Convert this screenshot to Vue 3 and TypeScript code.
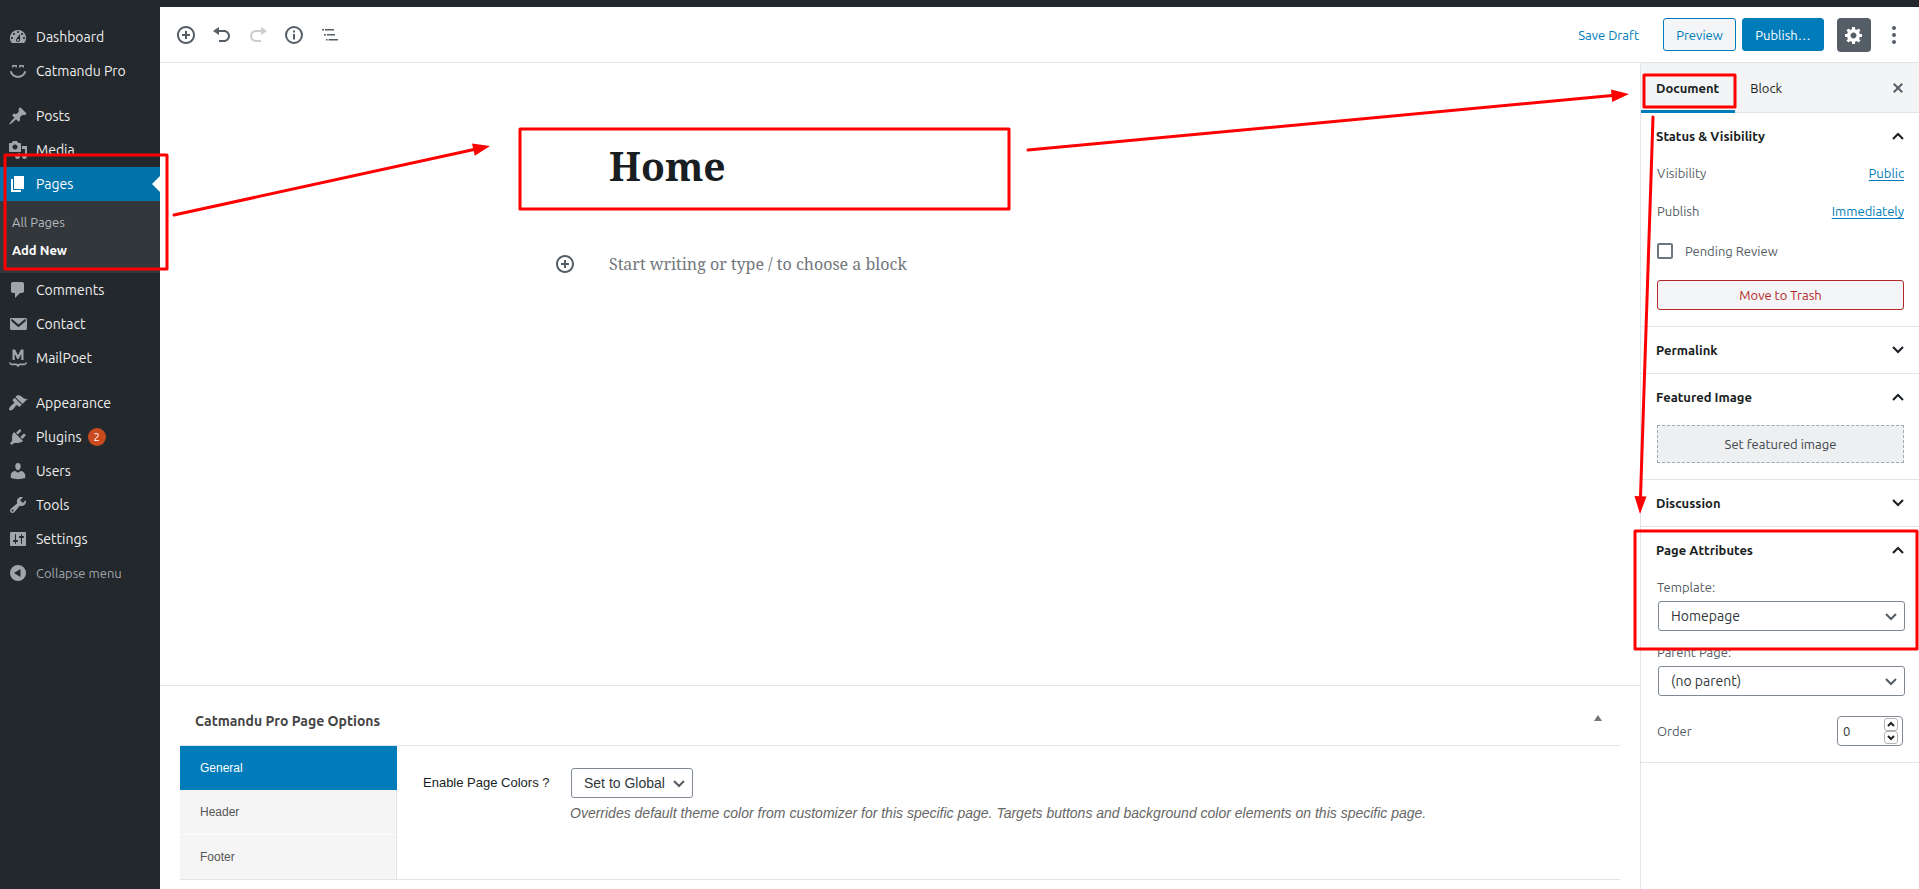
<script setup lang="ts">
import { ref } from 'vue'

interface MenuEntry {
  label: string
  icon: string
  current?: boolean
  badge?: number
  children?: { label: string; current?: boolean }[]
}

const icons: Record<string, string> = {
  dashboard:
    'M3.76 16h12.48A7.998 7.998 0 0 0 10 3a7.998 7.998 0 0 0-6.24 13zM10 4c.55 0 1 .45 1 1s-.45 1-1 1-1-.45-1-1 .45-1 1-1zM6 6c.55 0 1 .45 1 1s-.45 1-1 1-1-.45-1-1 .45-1 1-1zm8 0c.55 0 1 .45 1 1s-.45 1-1 1-1-.45-1-1 .45-1 1-1zm-5.37 5.55L12 7v6c0 1.1-.9 2-2 2s-2-.9-2-2c0-.57.24-1.08.63-1.45zM4 10c.55 0 1 .45 1 1s-.45 1-1 1-1-.45-1-1 .45-1 1-1zm12 0c.55 0 1 .45 1 1s-.45 1-1 1-1-.45-1-1 .45-1 1-1zm-5 3c0-.55-.45-1-1-1s-1 .45-1 1 .45 1 1 1 1-.45 1-1z',
  smiley:
    'M5 4h3c.6 0 1 .4 1 1v1.500H7.500V5.600h-2v.9H4V5c0-.6.4-1 1-1zm7 0h3c.6 0 1 .4 1 1v1.500h-1.500v-.9h-2v.9H11V5c0-.6.4-1 1-1zM1.800 10.300h1.900c.9 2.800 3.400 4.700 6.300 4.700s5.400-1.900 6.300-4.700h1.900c-.9 3.900-4.200 6.500-8.200 6.500s-7.300-2.600-8.200-6.500z',
  post: 'M10.44 3.02l1.82-1.82 6.36 6.35-1.83 1.82c-1.05-.68-2.48-.57-3.41.36l-.75.75c-.92.93-1.04 2.35-.35 3.41l-1.83 1.82-2.41-2.41-2.8 2.79c-.42.42-3.38 2.71-3.8 2.29s1.86-3.39 2.28-3.81l2.79-2.79L4.1 9.36l1.83-1.82c1.05.69 2.48.57 3.4-.36l.75-.75c.93-.92 1.05-2.35.36-3.41z',
  media:
    'M13 11V4c0-.55-.45-1-1-1h-1.67L9 1H5L3.67 3H2c-.55 0-1 .45-1 1v7c0 .55.45 1 1 1h10c.55 0 1-.45 1-1zM7 4.5c1.38 0 2.5 1.12 2.5 2.5S8.38 9.5 7 9.5 4.5 8.38 4.5 7 5.62 4.500 7 4.500zM14 6h5v10.5c0 1.38-1.12 2.5-2.5 2.5S14 17.88 14 16.5s1.12-2.5 2.5-2.5c.17 0 .34.02.5.05V9h-3V6zm-4 8.05V13h2v3.5c0 1.38-1.12 2.5-2.5 2.5S7 17.88 7 16.5 8.12 14 9.5 14c.17 0 .34.02.5.05z',
  page: 'M6 15V2h10v13H6zm-1 1h8v2H3V5h2v11z',
  comment:
    'M5 2h9c1.1 0 2 .9 2 2v7c0 1.1-.9 2-2 2h-2l-5 5v-5H5c-1.100 0-2-.9-2-2V4c0-1.100.9-2 2-2z',
  email:
    'M3 4h14.500c.8 0 1.500.7 1.500 1.500v9c0 .8-.7 1.500-1.500 1.500h-14c-.8 0-1.500-.7-1.500-1.500v-9C2 4.700 2.300 4 3 4zM3.200 5.300v1.700l7.300 6.300 7.300-6.300V5.300h-1.100l-6.200 5.300-6.200-5.300z',
  mailpoet:
    'M4.500 12V1.500h2.600L10 7.200l2.900-5.700h2.600V12h-2.200V5.800L10.700 11H9.300L6.700 5.800V12zM1 14.200h1.300c.3 1 1 1.300 2 1.300h3.200c1.200 0 1.900.3 2.500 1 .6-.7 1.300-1 2.500-1h3.200c1 0 1.700-.3 2-1.300H19c-.2 2-1.400 3-3.300 3h-3.200c-.9 0-1.500.5-1.700 1.500H9.200c-.2-1-.8-1.500-1.700-1.500H4.300c-1.900 0-3.100-1-3.300-3z',
  appearance:
    'M14.48 11.06L7.41 3.99l1.5-1.5c.5-.56 2.3-.47 3.51.32 1.21.8 1.43 1.28 2.91 2.1 1.18.64 2.45 1.26 4.45.85zm-.71.71L6.7 4.7 4.93 6.47c-.39.39-.39 1.02 0 1.41l1.06 1.06c.39.39.39 1.03 0 1.42-.6.6-1.43 1.11-2.21 1.69-.35.26-.7.53-1.01.84C1.43 14.23.4 16.08 1.4 17.07c.99 1 2.84-.03 4.18-1.36.31-.31.58-.66.85-1.02.57-.78 1.08-1.61 1.69-2.21.39-.39 1.02-.39 1.41 0l1.06 1.06c.39.39 1.02.39 1.41 0z',
  plugin:
    'M13.11 4.36L9.87 7.6 8 5.73l3.24-3.24c.35-.34 1.05-.2 1.56.32.52.51.66 1.21.31 1.55zm-8 1.77l.91-1.12 9.01 9.01-1.19.84c-.71.71-2.63 1.16-3.82 1.16H6.14L4.9 17.26c-.59.59-1.54.59-2.12 0-.59-.58-.59-1.53 0-2.12l1.24-1.24v-3.88c0-1.13.4-3.19 1.09-3.89zm7.26 3.97l3.24-3.24c.34-.35 1.04-.21 1.55.31.52.51.66 1.21.31 1.55l-3.24 3.25z',
  user: 'M10 9.25c-2.27 0-2.73-3.44-2.73-3.44C7 4.02 7.82 2 9.97 2c2.16 0 2.98 2.02 2.71 3.81 0 0-.41 3.44-2.68 3.44zm0 2.57L12.72 10c2.39 0 4.52 2.33 4.52 4.53v2.49s-3.65 1.13-7.24 1.13c-3.65 0-7.24-1.13-7.24-1.13v-2.49c0-2.25 1.94-4.48 4.47-4.48z',
  tool: 'M16.68 9.77c-1.34 1.34-3.3 1.67-4.95.99l-5.41 6.52c-.99.99-2.59.99-3.58 0s-.99-2.59 0-3.57l6.52-5.42c-.68-1.65-.35-3.61.99-4.95 1.28-1.28 3.12-1.62 4.72-1.06l-2.89 2.89 2.82 2.82 2.86-2.87c.53 1.58.18 3.39-1.08 4.65zM3.81 16.21c.4.39 1.04.39 1.43 0 .4-.4.4-1.04 0-1.43-.39-.4-1.03-.4-1.43 0-.39.39-.39 1.03 0 1.43z',
  settings:
    'M18 16V4c0-.55-.45-1-1-1H3c-.55 0-1 .45-1 1v12c0 .55.45 1 1 1h14c.55 0 1-.45 1-1zM8 11h1c.55 0 1 .45 1 1s-.45 1-1 1H8v1.5c0 .28-.22.5-.5.5s-.5-.22-.5-.5V13H6c-.55 0-1-.45-1-1s.45-1 1-1h1V5.500c0-.28.22-.5.5-.5s.5.22.5.5V11zm5-2h-1c-.55 0-1-.45-1-1s.45-1 1-1h1V5.500c0-.28.22-.5.5-.5s.5.22.5.5V7h1c.55 0 1 .45 1 1s-.45 1-1 1h-1v5.500c0 .28-.22.5-.5.5s-.5-.22-.5-.5V9z',
  collapse:
    'M10 2a8 8 0 1 0 0 16 8 8 0 0 0 0-16zM12.500 6v8L6 10z',
  insert:
    'M10 1c-5 0-9 4-9 9s4 9 9 9 9-4 9-9-4-9-9-9zm0 16c-3.9 0-7-3.1-7-7s3.1-7 7-7 7 3.1 7 7-3.1 7-7 7zm1-11H9v3H6v2h3v3h2v-3h3V9h-3V6z',
  undo: 'M12 5H7V2L1 6l6 4V7h5c2.2 0 4 1.8 4 4s-1.8 4-4 4H7v2h5c3.3 0 6-2.7 6-6s-2.7-6-6-6z',
  redo: 'M8 5h5V2l6 4-6 4V7H8c-2.2 0-4 1.8-4 4s1.8 4 4 4h5v2H8c-3.3 0-6-2.7-6-6s2.7-6 6-6z',
  info: 'M10 1a9 9 0 1 0 0 18 9 9 0 0 0 0-18zm0 2a7 7 0 1 1 0 14 7 7 0 0 1 0-14zM9 5.500h2v2H9zM9 9h2v5.500H9z',
  outline: 'M2 4h2v1.600H2zM5 4h9v1.600H5zM4 9h2v1.600H4zM7 9h8v1.600H7zM6 14h1.500v1.600H6zM8.500 14H18v1.600H8.500z',
  gear: 'M18 12h-2.18c-.17.7-.44 1.35-.81 1.93l1.54 1.54-2.1 2.1-1.54-1.54c-.58.36-1.23.63-1.91.79V19H8v-2.18c-.68-.16-1.33-.43-1.91-.79l-1.54 1.54-2.12-2.12 1.54-1.54c-.36-.58-.63-1.23-.79-1.91H1V9.03h2.17c.16-.7.44-1.35.8-1.94L2.43 5.55l2.1-2.1 1.54 1.54c.58-.37 1.24-.64 1.93-.81V2h3v2.18c.68.16 1.33.43 1.91.79l1.54-1.54 2.12 2.12-1.54 1.54c.36.59.64 1.24.8 1.94H18V12zm-8.5 1.5c1.66 0 3-1.34 3-3s-1.34-3-3-3-3 1.34-3 3 1.34 3 3 3z',
  more: 'M10 1a2 2 0 1 0 0 4 2 2 0 0 0 0-4zM10 8a2 2 0 1 0 0 4 2 2 0 0 0 0-4zM10 15a2 2 0 1 0 0 4 2 2 0 0 0 0-4z',
  close:
    'M14.95 6.46L11.41 10l3.54 3.54-1.41 1.41L10 11.42l-3.53 3.53-1.42-1.42L8.58 10 5.05 6.47l1.42-1.42L10 8.58l3.54-3.53z',
}

const menuGroups: MenuEntry[][] = [
  [
    { label: 'Dashboard', icon: 'dashboard' },
    { label: 'Catmandu Pro', icon: 'smiley' },
  ],
  [
    { label: 'Posts', icon: 'post' },
    { label: 'Media', icon: 'media' },
    {
      label: 'Pages',
      icon: 'page',
      current: true,
      children: [{ label: 'All Pages' }, { label: 'Add New', current: true }],
    },
    { label: 'Comments', icon: 'comment' },
    { label: 'Contact', icon: 'email' },
    { label: 'MailPoet', icon: 'mailpoet' },
  ],
  [
    { label: 'Appearance', icon: 'appearance' },
    { label: 'Plugins', icon: 'plugin', badge: 2 },
    { label: 'Users', icon: 'user' },
    { label: 'Tools', icon: 'tool' },
    { label: 'Settings', icon: 'settings' },
  ],
]

const tools = [
  { name: 'Add block', icon: 'insert', disabled: false },
  { name: 'Undo', icon: 'undo', disabled: false },
  { name: 'Redo', icon: 'redo', disabled: true },
  { name: 'Content structure', icon: 'info', disabled: false },
  { name: 'Block navigation', icon: 'outline', disabled: false },
]

const optionTabs = ['General', 'Header', 'Footer']
const activeOption = ref('General')
const title = ref('Home')
const body = ref('')
const pending = ref(false)
const template = ref('Homepage')
const parent = ref('(no parent)')
const pageColors = ref('Set to Global')
const order = ref(0)
</script>

<template>
  <div class="page">
    <div class="admin-bar"></div>
    <div class="admin">
      <nav class="menu" aria-label="Main menu">
        <ul v-for="(group, g) in menuGroups" :key="g" class="menu-group">
          <li v-for="entry in group" :key="entry.label">
            <a href="#" class="menu-link" :class="{ current: entry.current }">
              <svg class="icon" viewBox="0 0 20 20" fill-rule="evenodd"><path :d="icons[entry.icon]" /></svg>
              <span>{{ entry.label }}</span>
              <span v-if="entry.badge" class="badge">{{ entry.badge }}</span>
            </a>
            <ul v-if="entry.children" class="submenu">
              <li v-for="child in entry.children" :key="child.label">
                <a href="#" :class="{ current: child.current }">{{ child.label }}</a>
              </li>
            </ul>
          </li>
        </ul>
        <button type="button" class="menu-link collapse">
          <svg class="icon" viewBox="0 0 20 20" fill-rule="evenodd"><path :d="icons.collapse" /></svg>
          <span>Collapse menu</span>
        </button>
      </nav>

      <div class="editor">
        <header class="toolbar">
          <div class="tools">
            <button v-for="tool in tools" :key="tool.name" type="button" class="tool" :aria-label="tool.name" :disabled="tool.disabled">
              <svg class="icon" viewBox="0 0 20 20" fill-rule="evenodd"><path :d="icons[tool.icon]" /></svg>
            </button>
          </div>
          <div class="actions">
            <button type="button" class="save">Save Draft</button>
            <button type="button" class="preview">Preview</button>
            <button type="button" class="publish">Publish…</button>
            <button type="button" class="gear" aria-label="Settings">
              <svg class="icon" viewBox="0 0 20 20" fill-rule="evenodd"><path :d="icons.gear" /></svg>
            </button>
            <button type="button" class="more" aria-label="More options">
              <svg class="icon" viewBox="0 0 20 20"><path :d="icons.more" /></svg>
            </button>
          </div>
        </header>

        <div class="columns">
          <main class="content">
            <div class="canvas">
              <div class="writing">
                <input v-model="title" class="title" type="text" aria-label="Title" />
                <div class="block">
                  <button type="button" class="inserter" aria-label="Add block">
                    <svg class="icon" viewBox="0 0 20 20" fill-rule="evenodd"><path :d="icons.insert" /></svg>
                  </button>
                  <input v-model="body" class="paragraph" type="text" placeholder="Start writing or type / to choose a block" aria-label="Block text" />
                </div>
              </div>
            </div>

            <section class="meta">
              <div class="metabox">
                <div class="metabox-head">
                  <h2>Catmandu Pro Page Options</h2>
                  <button type="button" class="toggle" aria-label="Toggle panel">
                    <svg viewBox="0 0 8 6"><path d="M4 0l4 6H0z" /></svg>
                  </button>
                </div>
                <div class="metabox-body">
                  <div class="option-tabs">
                    <button
                      v-for="tab in optionTabs"
                      :key="tab"
                      type="button"
                      :class="{ active: tab === activeOption }"
                      @click="activeOption = tab"
                    >{{ tab }}</button>
                  </div>
                  <div class="option">
                    <label for="page-colors">Enable Page Colors ?</label>
                    <div class="option-field">
                      <div class="select small">
                        <select id="page-colors" v-model="pageColors">
                          <option>Set to Global</option>
                        </select>
                        <svg viewBox="0 0 10 6"><path d="M0 0l5 5 5-5" /></svg>
                      </div>
                      <p>Overrides default theme color from customizer for this specific page. Targets buttons and background color elements on this specific page.</p>
                    </div>
                  </div>
                </div>
              </div>
            </section>
          </main>

          <aside class="settings">
            <div class="tabs">
              <button type="button" class="tab active">Document</button>
              <button type="button" class="tab">Block</button>
              <button type="button" class="close" aria-label="Close settings">
                <svg class="icon" viewBox="0 0 20 20"><path :d="icons.close" /></svg>
              </button>
            </div>

            <section class="panel">
              <h2><button type="button">Status &amp; Visibility<svg viewBox="0 0 12 8"><path d="M1 7l5-5 5 5" /></svg></button></h2>
              <div class="panel-body status">
                <div class="row"><span>Visibility</span><a href="#">Public</a></div>
                <div class="row"><span>Publish</span><a href="#">Immediately</a></div>
                <label class="check"><input v-model="pending" type="checkbox" />Pending Review</label>
                <button type="button" class="trash">Move to Trash</button>
              </div>
            </section>

            <section class="panel">
              <h2><button type="button">Permalink<svg viewBox="0 0 12 8"><path d="M1 1l5 5 5-5" /></svg></button></h2>
            </section>

            <section class="panel">
              <h2><button type="button">Featured Image<svg viewBox="0 0 12 8"><path d="M1 7l5-5 5 5" /></svg></button></h2>
              <div class="panel-body">
                <button type="button" class="featured">Set featured image</button>
              </div>
            </section>

            <section class="panel">
              <h2><button type="button">Discussion<svg viewBox="0 0 12 8"><path d="M1 1l5 5 5-5" /></svg></button></h2>
            </section>

            <section class="panel">
              <h2><button type="button">Page Attributes<svg viewBox="0 0 12 8"><path d="M1 7l5-5 5 5" /></svg></button></h2>
              <div class="panel-body attributes">
                <label for="template">Template:</label>
                <div class="select">
                  <select id="template" v-model="template"><option>Homepage</option></select>
                  <svg viewBox="0 0 10 6"><path d="M0 0l5 5 5-5" /></svg>
                </div>
                <label for="parent">Parent Page:</label>
                <div class="select">
                  <select id="parent" v-model="parent"><option>(no parent)</option></select>
                  <svg viewBox="0 0 10 6"><path d="M0 0l5 5 5-5" /></svg>
                </div>
                <div class="order">
                  <label for="order">Order</label>
                  <div class="number">
                    <input id="order" v-model="order" type="number" />
                    <div class="spin">
                      <button type="button" aria-label="Increase order" @click="order++"><svg viewBox="0 0 6 4"><path d="M0 3l3-3 3 3" /></svg></button>
                      <button type="button" aria-label="Decrease order" @click="order--"><svg viewBox="0 0 6 4"><path d="M0 0l3 3 3-3" /></svg></button>
                    </div>
                  </div>
                </div>
              </div>
            </section>
          </aside>
        </div>
      </div>
    </div>

    <svg class="guide" viewBox="0 0 1919 889" preserveAspectRatio="none" aria-hidden="true">
      <g class="guide-lines">
        <rect x="5" y="155" width="162" height="114" />
        <rect x="520" y="129" width="489" height="80" />
        <rect x="1644" y="75" width="91" height="32" />
        <rect x="1635" y="531" width="282" height="118" />
        <path d="M174 215L474 149.500M1028 150L1612 95.500M1653 117L1640.500 497" />
      </g>
      <path class="guide-heads" d="M490 146l-18-2.500 2.800 12.200zM1629 94l-18-4.500 1.200 12.500zM1640 514l-5.500-18 12 .4z" />
    </svg>
  </div>
</template>

<style>
body {
  margin: 0;
}
</style>

<style scoped>
.page {
  position: relative;
  display: flex;
  flex-direction: column;
  min-height: 100vh;
  font-family: Ubuntu, "Open Sans", "Noto Sans", sans-serif;
  font-size: 13px;
  line-height: 18px;
  color: #191e23;
  background: #fff;
}
.page *,
.page *::before,
.page *::after {
  box-sizing: border-box;
}
ul {
  margin: 0;
  padding: 0;
  list-style: none;
}
h2,
p {
  margin: 0;
}
button,
input,
select {
  font: inherit;
  color: inherit;
  margin: 0;
  padding: 0;
  border: 0;
  background: none;
}
.icon {
  width: 20px;
  height: 20px;
  flex: none;
  fill: currentColor;
}
.admin-bar {
  height: 7px;
  background: #23282d;
}
.admin {
  flex: 1;
  display: flex;
}

.menu {
  width: 160px;
  flex: none;
  padding-top: 13px;
  background: #23282d;
  color: #eee;
  font-size: 14px;
}
.menu-group + .menu-group {
  margin-top: 11px;
}
.menu-link {
  position: relative;
  display: flex;
  align-items: center;
  width: 100%;
  height: 34px;
  padding-left: 8px;
  color: #eee;
  text-decoration: none;
}
.menu-link .icon {
  margin-right: 8px;
  color: #a0a5aa;
}
.menu-link.current {
  background: #0073aa;
  color: #fff;
}
.menu-link.current .icon {
  color: #fff;
}
.menu-link.current::after {
  content: "";
  position: absolute;
  right: 0;
  top: 9px;
  border: 8px solid transparent;
  border-left: 0;
  border-right-color: #fff;
}
.badge {
  width: 18px;
  height: 18px;
  margin-left: 6px;
  border-radius: 9px;
  background: #ca4a1f;
  color: #fff;
  font-size: 11px;
  text-align: center;
}
.submenu {
  padding: 7px 0 9px;
  background: #32373c;
  font-size: 13px;
}
.submenu a {
  display: block;
  padding: 5px 12px;
  color: #b4b9be;
  text-decoration: none;
}
.submenu a.current {
  color: #fff;
  font-weight: 600;
}
.collapse {
  color: #a0a5aa;
  font-size: 13px;
}

.editor {
  flex: 1;
  min-width: 0;
  display: flex;
  flex-direction: column;
}
.toolbar {
  display: flex;
  justify-content: space-between;
  align-items: center;
  height: 56px;
  padding: 0 8px;
  border-bottom: 1px solid #e2e4e7;
  color: #555d66;
}
.tools,
.actions {
  display: flex;
  align-items: center;
}
.tool {
  display: flex;
  align-items: center;
  justify-content: center;
  width: 36px;
  height: 36px;
}
.tool:disabled {
  opacity: 0.3;
}
.save {
  margin-right: 24px;
  color: #007cba;
}
.preview,
.publish {
  height: 33px;
  border: 1px solid #007cba;
  border-radius: 3px;
}
.preview {
  width: 73px;
  margin-right: 6px;
  background: #f3f5f6;
  color: #007cba;
}
.publish {
  width: 82px;
  margin-right: 13px;
  background: #007cba;
  color: #fff;
}
.gear,
.more {
  display: flex;
  align-items: center;
  justify-content: center;
  width: 34px;
  height: 34px;
}
.gear {
  margin-right: 6px;
  border-radius: 4px;
  background: #555d66;
  color: #fff;
}

.columns {
  flex: 1;
  display: flex;
}
.content {
  flex: 1;
  min-width: 0;
  display: flex;
  flex-direction: column;
}
.canvas {
  flex: 1;
  padding-top: 62px;
  font-family: "Noto Serif", "Liberation Serif", serif;
}
.writing {
  width: 582px;
  margin: 0 auto;
}
.title {
  display: block;
  width: 100%;
  height: 80px;
  font-size: 39px;
  font-weight: 700;
  outline: 0;
}
.block {
  position: relative;
  margin-top: 44px;
}
.inserter {
  position: absolute;
  left: -62px;
  top: 0;
  display: flex;
  align-items: center;
  justify-content: center;
  width: 36px;
  height: 30px;
  color: #555d66;
}
.paragraph {
  display: block;
  width: 100%;
  height: 30px;
  font-size: 16px;
  outline: 0;
}
.paragraph::placeholder {
  color: #72777c;
  opacity: 1;
}

.meta {
  padding: 12px 20px 9px;
  border-top: 1px solid #e2e4e7;
}
.metabox {
  border-bottom: 1px solid #e2e4e7;
}
.metabox-head {
  display: flex;
  align-items: center;
  justify-content: space-between;
  height: 48px;
  padding: 0 18px 2px 15px;
  border-bottom: 1px solid #e2e4e7;
}
.metabox-head h2 {
  font-size: 14px;
  font-weight: 600;
  color: #444;
}
.toggle {
  display: flex;
  padding-bottom: 6px;
}
.toggle svg {
  width: 8px;
  height: 6px;
  fill: #72777c;
}
.metabox-body {
  display: flex;
  font-family: "Liberation Sans", Arial, sans-serif;
}
.option-tabs {
  width: 217px;
  flex: none;
  display: flex;
  flex-direction: column;
  border-right: 1px solid #e2e4e7;
}
.option-tabs button {
  height: 45px;
  padding-left: 20px;
  border-bottom: 1px solid #fff;
  background: #f5f5f5;
  color: #555;
  font-size: 12px;
  text-align: left;
}
.option-tabs button.active {
  height: 44px;
  margin-right: -1px;
  border: 0;
  background: #007cba;
  color: #fff;
}
.option-tabs button:last-child {
  height: 44px;
  border: 0;
}
.option {
  flex: 1;
  display: flex;
  padding: 22px 26px 0;
}
.option > label {
  width: 121px;
  flex: none;
  white-space: nowrap;
  line-height: 30px;
}
.option-field {
  padding-left: 26px;
  flex: 1;
}
.option-field p {
  margin-top: 6px;
  color: #666;
  font-size: 14px;
  font-style: italic;
}

.settings {
  width: 279px;
  flex: none;
  border-left: 1px solid #e2e4e7;
}
.tabs {
  display: flex;
  height: 50px;
  padding-right: 9px;
  background: #f3f4f5;
  border-bottom: 1px solid #e2e4e7;
}
.tab {
  height: 50px;
  padding: 0 16px 0 15px;
  border-bottom: 3px solid transparent;
  border-top: 3px solid transparent;
}
.tab.active {
  border-bottom-color: #007cba;
  font-weight: 600;
}
.close {
  display: flex;
  align-items: center;
  margin-left: auto;
  padding: 0 2px;
  color: #555d66;
}
.panel {
  border-bottom: 1px solid #e2e4e7;
}
.panel h2 {
  font-size: 13px;
  font-weight: 600;
}
.panel h2 button {
  display: flex;
  align-items: center;
  justify-content: space-between;
  width: 100%;
  height: 46px;
  padding: 0 15px;
}
.panel h2 svg {
  width: 12px;
  height: 8px;
  fill: none;
  stroke: #191e23;
  stroke-width: 2;
}
.panel-body {
  padding: 5px 15px 16px 16px;
  color: #555d66;
}
.status {
  padding-top: 0;
}
.row {
  display: flex;
  align-items: center;
  justify-content: space-between;
  height: 28px;
  margin-bottom: 10px;
}
.row a {
  color: #007cba;
  text-underline-offset: 2px;
}
.check {
  display: flex;
  align-items: center;
  gap: 12px;
  height: 32px;
  margin-bottom: 13px;
}
.check input {
  appearance: none;
  width: 16px;
  height: 16px;
  border: 2px solid #6c7781;
  border-radius: 2px;
}
.check input:checked {
  background: #007cba;
}
.trash {
  width: 100%;
  height: 30px;
  border: 1px solid #b52727;
  border-radius: 3px;
  background: #f3f5f6;
  color: #b52727;
}
.featured {
  display: block;
  width: 100%;
  height: 38px;
  border: 1px dashed #a2aab2;
  background: #edeff0;
  color: #40464d;
}
.attributes label {
  display: block;
}
.select {
  position: relative;
  margin: 5px -1px 12px 1px;
  color: #32373c;
  font-size: 14px;
}
.select select {
  appearance: none;
  display: block;
  width: 100%;
  height: 30px;
  padding: 0 24px 0 12px;
  border: 1px solid #7e8993;
  border-radius: 3px;
  background: #fff;
}
.select svg {
  position: absolute;
  right: 9px;
  top: 13px;
  width: 10px;
  height: 6px;
  overflow: visible;
  fill: none;
  stroke: #555d66;
  stroke-width: 2;
  pointer-events: none;
}
.select.small {
  width: 122px;
  margin: 0 0 0 1px;
}
.order {
  display: flex;
  align-items: center;
  justify-content: space-between;
  margin-top: 20px;
}
.number {
  position: relative;
  width: 66px;
  margin-right: 1px;
}
.number input {
  appearance: textfield;
  display: block;
  width: 100%;
  height: 30px;
  padding: 0 22px 0 5px;
  border: 1px solid #7e8993;
  border-radius: 4px;
  color: #32373c;
}
.number input::-webkit-inner-spin-button {
  appearance: none;
  display: none;
}
.spin {
  position: absolute;
  top: 2px;
  right: 5px;
  display: grid;
  width: 14px;
}
.spin button {
  display: flex;
  align-items: center;
  justify-content: center;
  height: 13px;
  border: 1px solid #b4b4b4;
  border-radius: 3px;
}
.spin svg {
  width: 6px;
  height: 4px;
  overflow: visible;
  fill: none;
  stroke: #222;
  stroke-width: 2;
}

.guide {
  position: absolute;
  left: 0;
  top: 0;
  width: 100%;
  height: 100%;
  pointer-events: none;
}
.guide-lines {
  fill: none;
  stroke: #f00;
  stroke-width: 3;
  stroke-linecap: round;
  stroke-linejoin: round;
}
.guide-heads {
  fill: #f00;
}
</style>
